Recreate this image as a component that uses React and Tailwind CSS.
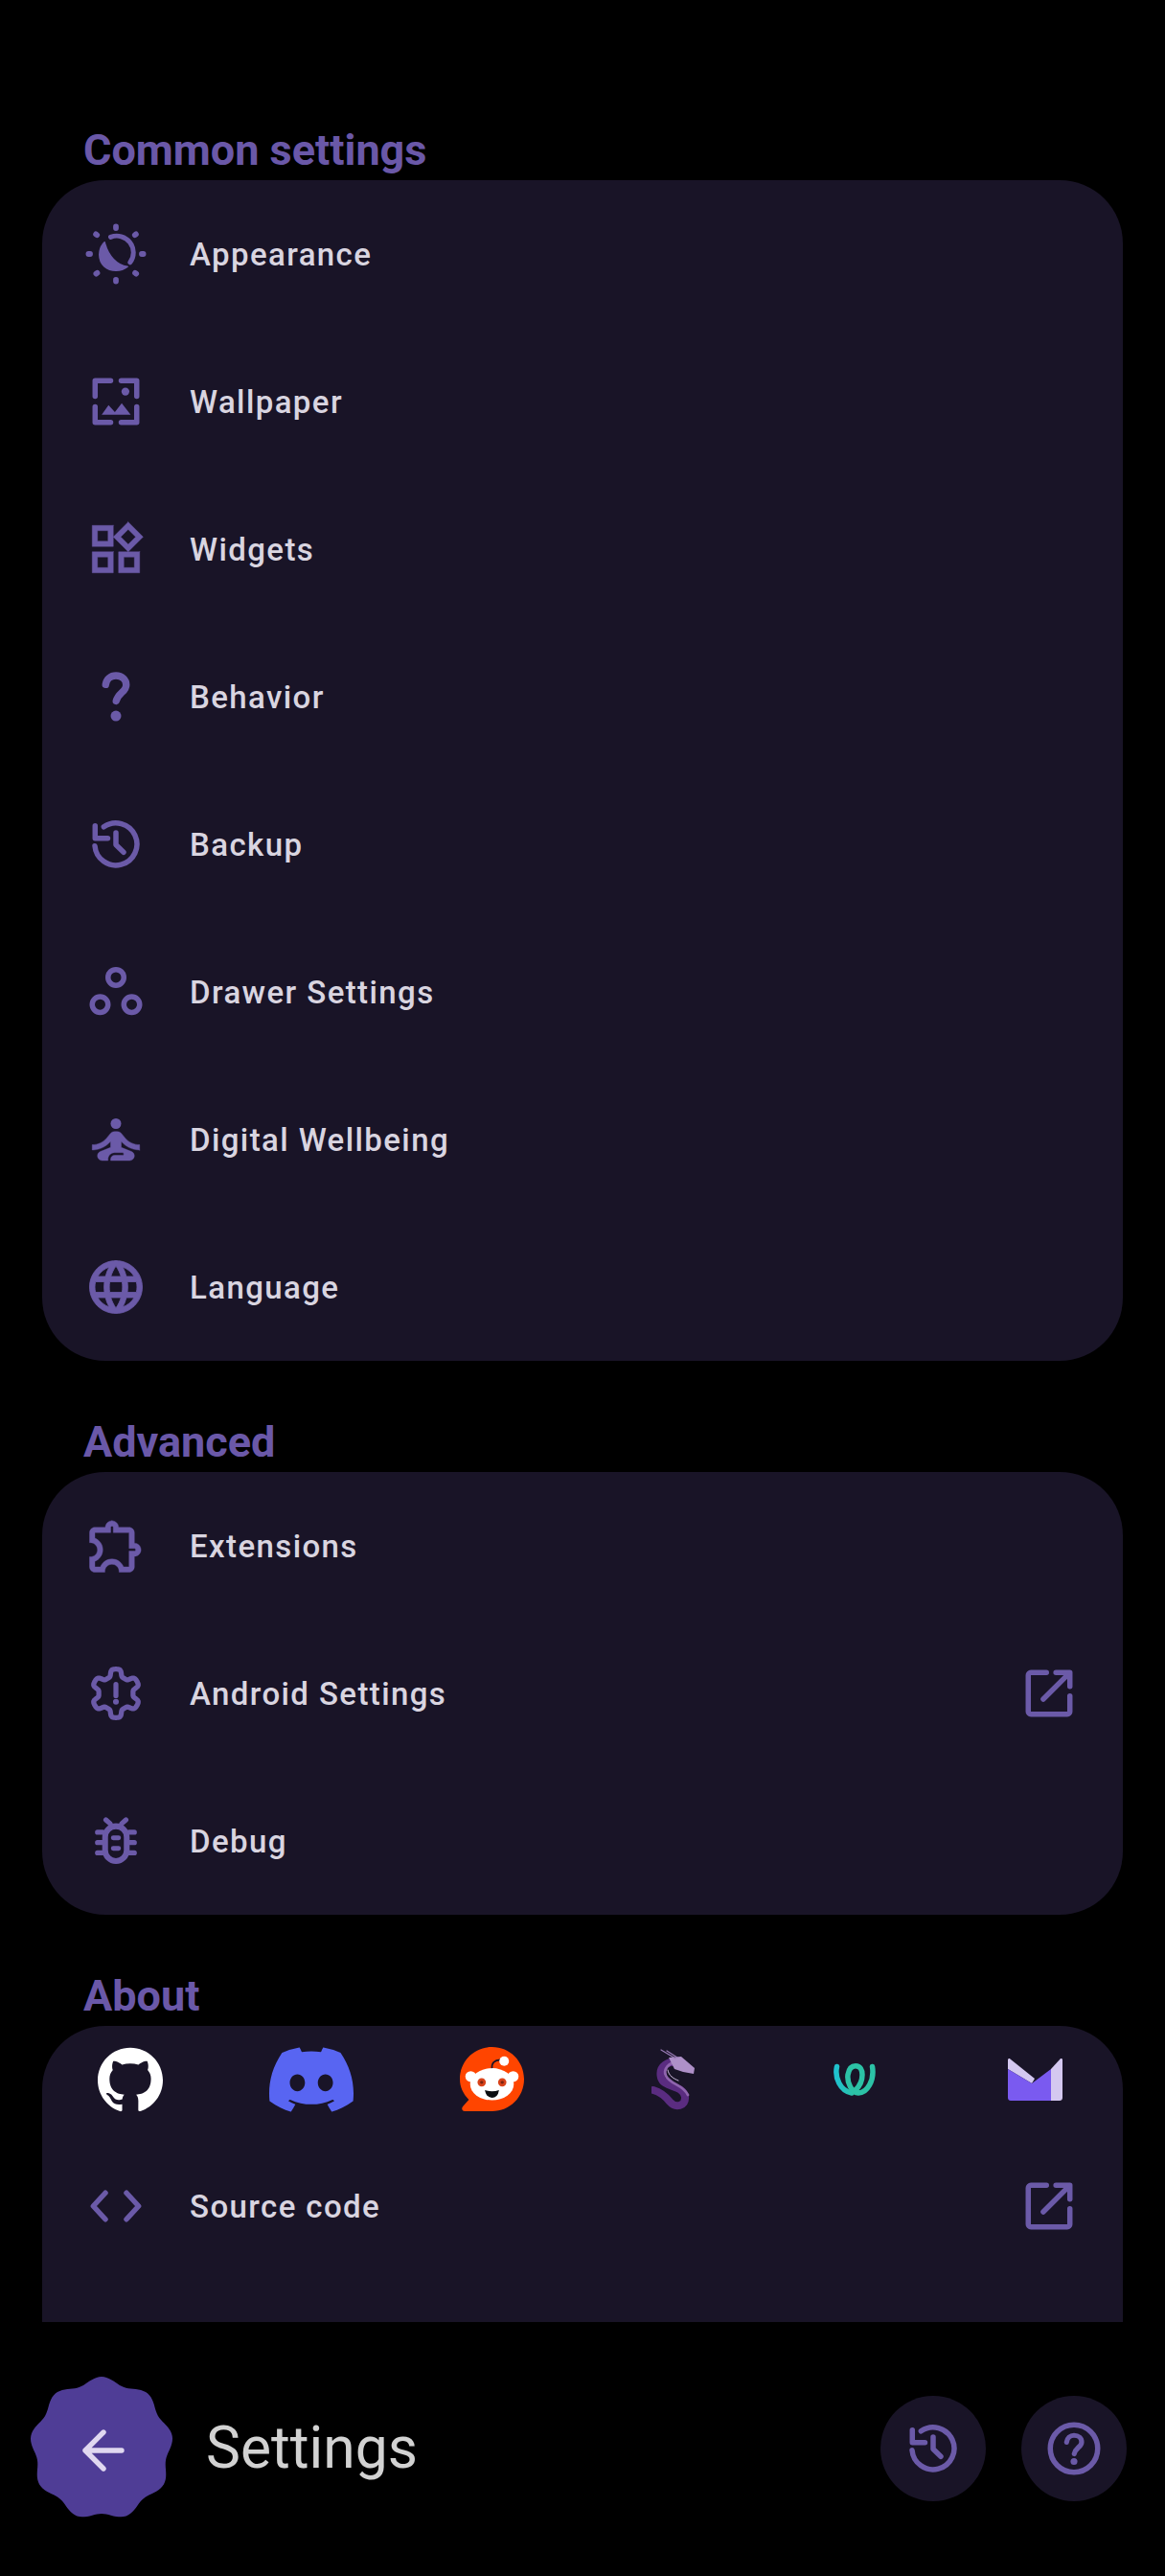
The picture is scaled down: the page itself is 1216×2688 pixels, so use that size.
import { SiGithub, SiDiscord } from 'react-icons/si';

// closed outline from a polar radius function, used for the back button and the gear
const polarPath = (cx, cy, radius, steps = 180, digits = 2) => {
  const pts = [];
  for (let i = 0; i < steps; i++) {
    const a = (i / steps) * Math.PI * 2;
    const r = radius(a);
    pts.push(`${(cx + r * Math.sin(a)).toFixed(digits)} ${(cy - r * Math.cos(a)).toFixed(digits)}`);
  }
  return `M${pts.join('L')}Z`;
};

const cookiePath = polarPath(75, 75, a => 71.5 + 3.4 * Math.cos(9 * a));
const gearPath = polarPath(12, 12, a => 7.85 + (1.35 * Math.tanh(2.4 * Math.cos(6 * a))) / Math.tanh(2.4), 144, 3);

const Ico = ({ children, className = 'text-[#6b5aa8]' }) => (
  <svg viewBox="0 0 24 24" className={`w-[66px] h-[66px] shrink-0 ${className}`} fill="none" stroke="currentColor" strokeWidth="2" strokeLinecap="round" strokeLinejoin="round">
    {children}
  </svg>
);

const Filled = ({ d, bold = 0.15 }) => <path d={d} fill="currentColor" strokeWidth={bold} />;

const AppearanceIcon = () => (
  <Ico>
    <path d="M12 1.6v.6M12 21.8v.6M1.6 12h.6M21.8 12h.6M4.4 4.5l.4.3M19.3 19.2l.4.3M4.5 19.5l.4-.3M19.2 4.8l.4-.3" strokeWidth="2.1" />
    <path d="M10 5.6A6.3 6.3 0 0 1 17.4 15.2" strokeWidth="1.8" />
    <path d="M7.7 7.6C5.2 10 5.1 14.4 7.6 16.7C10 18.8 14 18.8 16.4 16.8C12.4 16.4 9 12.8 7.7 7.6Z" fill="currentColor" strokeWidth="0.6" />
  </Ico>
);

const WallpaperIcon = () => (
  <Ico>
    <path d="M10 4.1H4.1V10M14 4.1H19.9V10M4.1 14V19.9H10M19.9 14V19.9H14" />
    <circle cx="15.6" cy="8.2" r="1.5" fill="currentColor" stroke="none" />
    <path d="M6.6 17L9.2 13.4L11.6 16L14.2 12.6L17.6 17Z" fill="currentColor" stroke="none" />
  </Ico>
);

const WidgetsIcon = () => (
  <Ico>
    <Filled d="M16.66 4.52l2.83 2.83-2.83 2.83-2.83-2.83 2.83-2.83M9 5v4H5V5h4m10 10v4h-4v-4h4M9 15v4H5v-4h4m7.66-13.31L11 7.34 16.66 13l5.66-5.66-5.66-5.65zM11 3H3v8h8V3zm10 10h-8v8h8v-8zm-10 0H3v8h8v-8z" />
  </Ico>
);

const BehaviorIcon = () => (
  <Ico>
    <path d="M8.1 7.4C8.4 5.3 10 4 12 4C14.4 4 15.9 5.6 15.9 7.5C15.9 10.2 12.9 10.4 12.1 13.6" strokeWidth="2.7" />
    <circle cx="12" cy="19.3" r="2" fill="currentColor" stroke="none" />
  </Ico>
);

const HistoryPaths = () => (
  <>
    <path d="M7.4 5.4A8 8 0 1 1 4 12.6" />
    <path d="M4.1 5V9.7H8.9" />
    <path d="M12 7.6V12.2L14.9 15" />
  </>
);

const DrawerIcon = () => (
  <Ico>
    <circle cx="12" cy="6.5" r="3" />
    <circle cx="6" cy="16.8" r="3" />
    <circle cx="18" cy="16.8" r="3" />
  </Ico>
);

const WellbeingIcon = () => (
  <Ico>
    <circle cx="12" cy="6" r="2" fill="currentColor" stroke="none" />
    <Filled d="M21 16v-2c-2.24 0-4.16-.96-5.6-2.68l-1.34-1.6c-.38-.46-.94-.72-1.53-.72h-1.05c-.59 0-1.15.26-1.53.72l-1.34 1.6C7.16 13.04 5.24 14 3 14v2c2.77 0 5.19-1.17 7-3.25V15l-3.88 1.55c-.67.27-1.12.93-1.12 1.66C5 19.2 5.8 20 6.79 20H9v-.5c0-1.38 1.12-2.5 2.5-2.5h3c.28 0 .5.22.5.5s-.22.5-.5.5h-3c-.83 0-1.5.67-1.5 1.5v.5h7.21c.99 0 1.79-.8 1.79-1.79 0-.73-.45-1.39-1.12-1.66L14 15v-2.25c1.81 2.08 4.23 3.25 7 3.25z" />
  </Ico>
);

const LanguageIcon = () => (
  <Ico>
    <Filled bold={0.3} d="M11.99 2C6.47 2 2 6.48 2 12s4.47 10 9.99 10C17.52 22 22 17.52 22 12S17.52 2 11.99 2zm6.93 6h-2.95c-.32-1.25-.78-2.45-1.38-3.56 1.84.63 3.37 1.91 4.33 3.56zM12 4.04c.83 1.2 1.48 2.53 1.91 3.96h-3.82c.43-1.43 1.08-2.76 1.91-3.96zM4.26 14C4.1 13.36 4 12.69 4 12s.1-1.36.26-2h3.38c-.08.66-.14 1.32-.14 2 0 .68.06 1.34.14 2H4.26zm.82 2h2.95c.32 1.25.78 2.45 1.38 3.56-1.84-.63-3.37-1.9-4.33-3.56zm2.95-8H5.08c.96-1.66 2.49-2.93 4.33-3.56C8.81 5.55 8.35 6.75 8.03 8zM12 19.96c-.83-1.2-1.48-2.53-1.91-3.96h3.82c-.43 1.43-1.08 2.76-1.91 3.96zM14.34 14H9.66c-.09-.66-.16-1.32-.16-2 0-.68.07-1.35.16-2h4.68c.09.65.16 1.32.16 2 0 .68-.07 1.34-.16 2zm.25 5.56c.6-1.11 1.06-2.31 1.38-3.56h2.95c-.96 1.65-2.49 2.93-4.33 3.56zM16.36 14c.08-.66.14-1.32.14-2 0-.68-.06-1.34-.14-2h3.38c.16.64.26 1.31.26 2s-.1 1.36-.26 2h-3.38z" />
  </Ico>
);

const ExtensionsIcon = () => (
  <Ico>
    <Filled d="M10.5 4.5c.28 0 .5.22.5.5v2h6v6h2c.28 0 .5.22.5.5s-.22.5-.5.5h-2v6h-2.12c-.68-1.75-2.39-3-4.38-3s-3.7 1.25-4.38 3H4v-2.12c1.75-.68 3-2.39 3-4.38 0-1.99-1.24-3.7-2.99-4.38L4 7h6V5c0-.28.22-.5.5-.5m0-2C9.12 2.5 8 3.62 8 5H4c-1.1 0-1.99.9-1.99 2v3.8h.29c1.49 0 2.7 1.21 2.7 2.7s-1.21 2.7-2.7 2.7H2V20c0 1.1.9 2 2 2h3.8v-.3c0-1.49 1.21-2.7 2.7-2.7s2.7 1.21 2.7 2.7v.3H17c1.1 0 2-.9 2-2v-4c1.38 0 2.5-1.12 2.5-2.5S20.38 11 19 11V7c0-1.1-.9-2-2-2h-4c0-1.38-1.12-2.5-2.5-2.5z" />
  </Ico>
);

const AndroidSettingsIcon = () => (
  <Ico>
    <path d={gearPath} strokeWidth="1.9" />
    <path d="M12 8.6V12.9" strokeWidth="1.9" />
    <circle cx="12" cy="15.2" r="1.1" fill="currentColor" stroke="none" />
  </Ico>
);

const DebugIcon = () => (
  <Ico>
    <rect x="7.9" y="6.4" width="8.2" height="13.2" rx="4.1" strokeWidth="2.2" />
    <path d="M5 8.7H7M5 12.6H7M5 16.5H7M17 8.7H19M17 12.6H19M17 16.5H19M8.2 4L9.8 5.4M15.8 4L14.2 5.4" strokeWidth="1.9" />
    <path d="M11 10.8H13M11 14.8H13" strokeWidth="1.8" />
  </Ico>
);

const CodeIcon = () => (
  <Ico>
    <path d="M8 7L3.4 12L8 17M16 7L20.6 12L16 17" />
  </Ico>
);

const ExternalIcon = () => (
  <Ico>
    <path d="M11 4.1H5.1A1 1 0 0 0 4.1 5.1V18.9A1 1 0 0 0 5.1 19.9H18.9A1 1 0 0 0 19.9 18.9V13" />
    <path d="M9.8 14.2L19.7 4.3M14.6 4.1H19.9V9.4" />
  </Ico>
);

const RedditLogo = () => (
  <svg viewBox="0 0 100 100" className="w-[67px] h-[67px]">
    <path d="M50 0C78 0 100 22 100 50C100 78 78 100 50 100H8C3 100 2 95 5 92L14 82C5 73 0 62 0 50C0 22 22 0 50 0Z" fill="#ff4500" />
    <circle cx="17" cy="46" r="8.5" fill="#fff" />
    <circle cx="83" cy="46" r="8.5" fill="#fff" />
    <ellipse cx="50" cy="58" rx="34" ry="25" fill="#fff" />
    <circle cx="34" cy="55" r="6.5" fill="#d8431a" />
    <circle cx="66" cy="55" r="6.5" fill="#d8431a" />
    <circle cx="34" cy="55" r="2.5" fill="#7a2410" />
    <circle cx="66" cy="55" r="2.5" fill="#7a2410" />
    <path d="M39 67Q50 71 61 67Q59 79 50 79Q41 79 39 67Z" fill="#0b0d10" />
    <path d="M50 33Q49 21 63 20" fill="none" stroke="#191427" strokeWidth="2.5" />
    <circle cx="69" cy="22" r="7.5" fill="#fff" />
  </svg>
);

const DragonLogo = () => (
  <svg viewBox="0 0 46 65" className="w-[46px] h-[65px]" fill="none" strokeLinecap="round" strokeLinejoin="round">
    <path d="M30 16C18 12 7 19 10 31C13 42 33 38 35 51C36 61 25 63 19 56C15 51 9 46 2 44" stroke="#5a2c80" strokeWidth="8" />
    <path d="M27 15C18 15 12 22 15 29C19 38 33 38 38 49" stroke="#8f64ae" strokeWidth="2.8" />
    <path d="M17 23C18 29 23 32 28 34" stroke="#d4c0e4" strokeWidth="1" />
    <path d="M18 10L31 9L45 21L44 27L33 25L24 22Z" fill="#ae90c8" />
    <path d="M10 2L25 11M16 3L27 10" stroke="#9a7cb6" strokeWidth="1.2" />
  </svg>
);

const WaveLogo = () => (
  <svg viewBox="0 0 45 34" className="w-[45px] h-[34px]" fill="none" strokeLinecap="round" strokeWidth="5.5">
    <defs>
      <linearGradient id="waveLeft" x1="0" y1="0" x2="22" y2="0" gradientUnits="userSpaceOnUse">
        <stop offset="0" stopColor="#1dc2d6" />
        <stop offset="1" stopColor="#2cc2a6" />
      </linearGradient>
    </defs>
    <path d="M4.5 3.5C2 15 8 29 20 31" stroke="url(#waveLeft)" />
    <path d="M41.5 3.5C44 18 36 31 27 31C20 31 15 20 16 12C17 6 20 2.8 24 2.8C29 2.8 31 7 31 12C31 18 28 24 24 28" stroke="#2cc2a6" />
  </svg>
);

const ProtonLogo = () => (
  <svg viewBox="0 0 57 44" className="w-[57px] h-[44px]">
    <path d="M0 1.5C0 .2 1.4-.4 2.4.4L28 21L25 26L0 11Z" fill="#d4c8f0" />
    <path d="M0 11L25 26L45 11V44H3C1.3 44 0 42.7 0 41Z" fill="#7a5af0" />
    <path d="M45 11L54.6.6C55.6-.4 57 .2 57 1.5V41C57 42.7 55.7 44 54 44H45Z" fill="#d4c8f0" />
  </svg>
);

const Row = ({ icon: Icon, label, external }) => (
  <div className="h-[154px] flex items-center pl-[44px] pr-[44px]">
    <Icon />
    <span className="ml-[44px] flex-1 pt-[2px] text-[33px] font-medium tracking-[1.4px] text-[#d9d5e0]">{label}</span>
    {external && <ExternalIcon />}
  </div>
);

const SectionTitle = ({ children }) => (
  <h2 className="pl-[87px] pb-[8px] text-[45px] leading-[46px] font-bold text-[#6a58a8]">{children}</h2>
);

const common = [
  { icon: AppearanceIcon, label: 'Appearance' },
  { icon: WallpaperIcon, label: 'Wallpaper' },
  { icon: WidgetsIcon, label: 'Widgets' },
  { icon: BehaviorIcon, label: 'Behavior' },
  { icon: () => <Ico><HistoryPaths /></Ico>, label: 'Backup' },
  { icon: DrawerIcon, label: 'Drawer Settings' },
  { icon: WellbeingIcon, label: 'Digital Wellbeing' },
  { icon: LanguageIcon, label: 'Language' },
];

const advanced = [
  { icon: ExtensionsIcon, label: 'Extensions' },
  { icon: AndroidSettingsIcon, label: 'Android Settings', external: true },
  { icon: DebugIcon, label: 'Debug' },
];

export default function App() {
  return (
    <div className="w-[1216px] h-[2688px] bg-black flex flex-col overflow-hidden font-['Roboto',sans-serif]">
      <main className="h-[2423px] shrink-0 overflow-hidden pt-[134px]">
        <SectionTitle>Common settings</SectionTitle>
        <section className="mx-[44px] rounded-[66px] bg-[#191427]">
          {common.map(r => <Row key={r.label} {...r} />)}
        </section>

        <div className="mt-[62px]">
          <SectionTitle>Advanced</SectionTitle>
          <section className="mx-[44px] rounded-[66px] bg-[#191427]">
            {advanced.map(r => <Row key={r.label} {...r} />)}
          </section>
        </div>

        <div className="mt-[62px]">
          <SectionTitle>About</SectionTitle>
          <section className="mx-[44px] h-[500px] rounded-[66px] bg-[#191427]">
            <div className="h-[111px] -mx-[3px] grid grid-cols-6 place-items-center">
              <SiGithub className="w-[68px] h-[68px] text-white" />
              <SiDiscord className="w-[88px] h-[88px] text-[#5865f2]" />
              <RedditLogo />
              <DragonLogo />
              <WaveLogo />
              <ProtonLogo />
            </div>
            <Row icon={CodeIcon} label="Source code" external />
          </section>
        </div>
      </main>

      <footer className="flex-1 flex items-center pl-[31px] pr-[40px] pb-[1px]">
        <svg viewBox="0 0 150 150" className="w-[150px] h-[150px] shrink-0" fill="none" strokeLinecap="round" strokeLinejoin="round">
          <path d={cookiePath} fill="#4f3d96" />
          <path d="M96 77H58M77 58L58 77L77 96" stroke="#e0d8f0" strokeWidth="5.4" />
        </svg>
        <h1 className="ml-[34px] flex-1 text-[60.5px] text-[#d2d2d2]">Settings</h1>
        <div className="w-[110px] h-[110px] rounded-full bg-[#191427] flex items-center justify-center">
          <Ico><HistoryPaths /></Ico>
        </div>
        <div className="ml-[37px] w-[110px] h-[110px] rounded-full bg-[#191427] flex items-center justify-center">
          <Ico>
            <circle cx="12" cy="12" r="9" />
            <path d="M9.2 9.6C9.4 8 10.6 7 12 7C13.7 7 14.9 8.1 14.9 9.5C14.9 11.4 12.6 11.6 12.1 14" strokeWidth="1.9" />
            <circle cx="12" cy="16.9" r="1.3" fill="currentColor" stroke="none" />
          </Ico>
        </div>
      </footer>
    </div>
  );
}
